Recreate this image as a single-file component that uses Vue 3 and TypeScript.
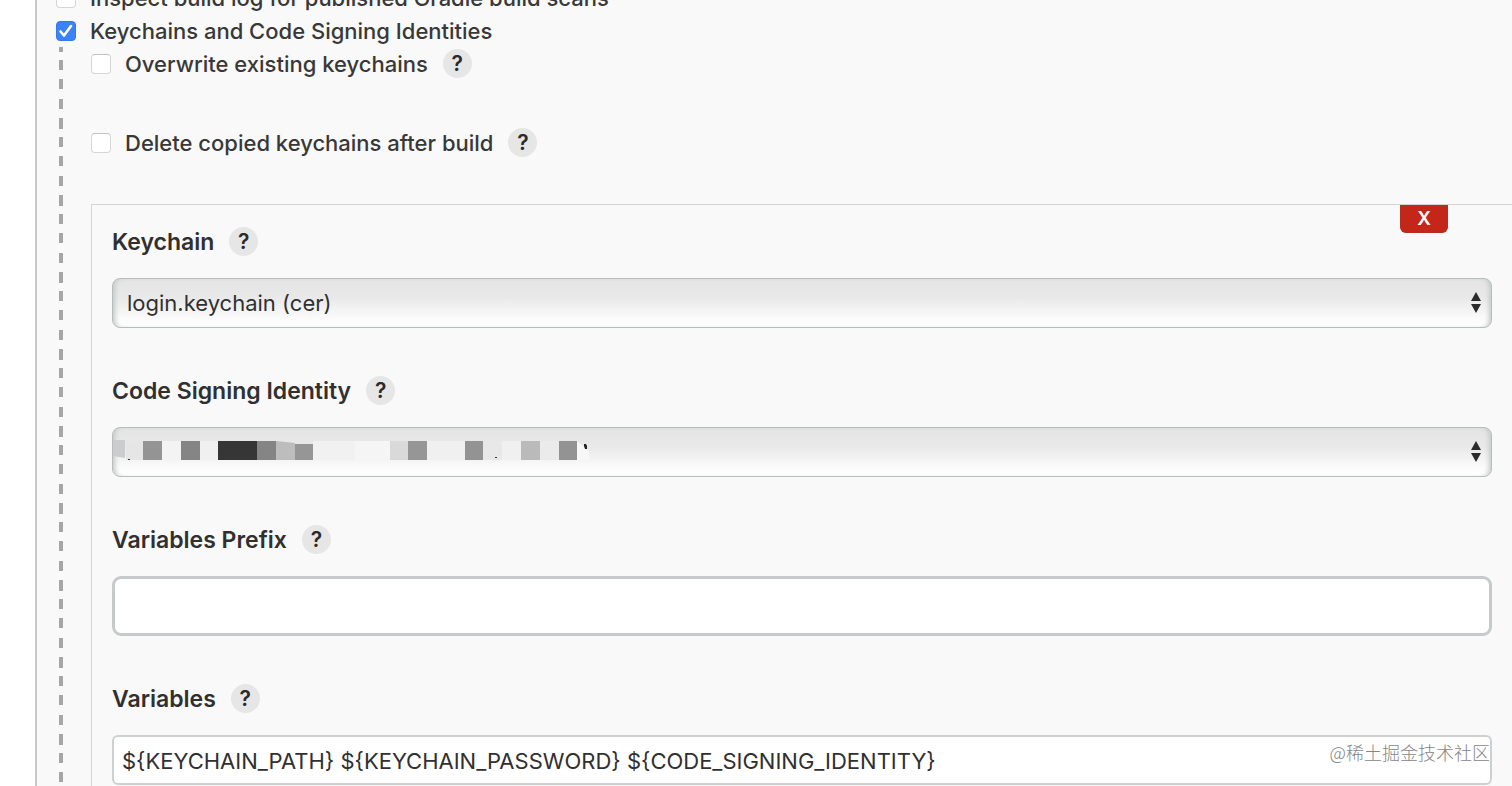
<script setup lang="ts">
import { ref } from 'vue'

interface Block {
  x: number
  w: number
  fill: string
}

const inspectLog = ref(false)
const keychainsEnabled = ref(true)
const overwrite = ref(false)
const deleteCopied = ref(false)
const keychain = ref('login')
const identity = ref('')
const prefix = ref('')
const variables = ref('${KEYCHAIN_PATH} ${KEYCHAIN_PASSWORD} ${CODE_SIGNING_IDENTITY}')

const blocks: Block[] = [
  { x: 14, w: 17, fill: '#e6e6e6' },
  { x: 31, w: 19, fill: '#949494' },
  { x: 50, w: 19, fill: '#f3f3f3' },
  { x: 69, w: 19, fill: '#858585' },
  { x: 88, w: 18, fill: '#f0f0f0' },
  { x: 106, w: 39, fill: '#363636' },
  { x: 145, w: 19, fill: '#858585' },
  { x: 201, w: 42, fill: '#f1f1f1' },
  { x: 243, w: 35, fill: '#f5f5f5' },
  { x: 278, w: 18, fill: '#d9d9d9' },
  { x: 296, w: 19, fill: '#969696' },
  { x: 315, w: 38, fill: '#f0f0f0' },
  { x: 353, w: 18, fill: '#939393' },
  { x: 371, w: 19, fill: '#e8e8e8' },
  { x: 390, w: 19, fill: '#f0f0f0' },
  { x: 409, w: 19, fill: '#bababa' },
  { x: 428, w: 19, fill: '#ebebeb' },
  { x: 447, w: 18, fill: '#939393' },
]
</script>

<template>
  <main class="page">
    <section class="panel">
      <div class="row">
        <input id="inspect" v-model="inspectLog" type="checkbox" class="check" />
        <label for="inspect">Inspect build log for published Gradle build scans</label>
      </div>
      <div class="row">
        <input id="keychains" v-model="keychainsEnabled" type="checkbox" class="check" />
        <label for="keychains">Keychains and Code Signing Identities</label>
      </div>

      <div class="nested">
        <div class="options">
          <div class="row">
            <input id="overwrite" v-model="overwrite" type="checkbox" class="check" />
            <label for="overwrite">Overwrite existing keychains</label>
            <button type="button" class="help">?</button>
          </div>
          <div class="row">
            <input id="delete" v-model="deleteCopied" type="checkbox" class="check" />
            <label for="delete">Delete copied keychains after build</label>
            <button type="button" class="help">?</button>
          </div>
        </div>

        <div class="card">
          <button type="button" class="remove">X</button>

          <div class="field">
            <div class="title">
              <label for="keychain">Keychain</label>
              <button type="button" class="help">?</button>
            </div>
            <div class="control">
              <select id="keychain" v-model="keychain" class="select">
                <option value="login">login.keychain (cer)</option>
              </select>
              <svg class="arrows" width="12" height="22" viewBox="0 0 12 22">
                <path d="M6 0 11 9H1ZM1 12h10L6 21Z" fill="#2b2b2b" />
              </svg>
            </div>
          </div>

          <div class="field">
            <div class="title">
              <label for="identity">Code Signing Identity</label>
              <button type="button" class="help">?</button>
            </div>
            <div class="control">
              <select id="identity" v-model="identity" class="select">
                <option value=""></option>
              </select>
              <svg class="mosaic" width="490" height="49" viewBox="0 0 490 49">
                <path d="M1 13H13V31L1 29Z" fill="#c9cdcd" />
                <rect v-for="b in blocks" :key="b.x" :x="b.x" y="14" :width="b.w" height="19" :fill="b.fill" />
                <path d="M164 14 183 16V33H164Z" fill="#bdbdbd" />
                <path d="M183 17H201V33H183Z" fill="#969696" />
                <path d="M465 14 477 24V33H465Z" fill="#f7f7f7" />
                <path d="M472 17h2l1 2v3h-2l-1-3Z" fill="#222" />
                <path d="M16 32h2v1h-2ZM383 30h2v1h-2Z" fill="#333" />
              </svg>
              <svg class="arrows" width="12" height="22" viewBox="0 0 12 22">
                <path d="M6 0 11 9H1ZM1 12h10L6 21Z" fill="#2b2b2b" />
              </svg>
            </div>
          </div>

          <div class="field">
            <div class="title">
              <label for="prefix">Variables Prefix</label>
              <button type="button" class="help">?</button>
            </div>
            <input id="prefix" v-model="prefix" type="text" class="text focused" />
          </div>

          <div class="field">
            <div class="title">
              <label for="variables">Variables</label>
              <button type="button" class="help">?</button>
            </div>
            <input id="variables" v-model="variables" type="text" class="text" />
          </div>
        </div>
      </div>
    </section>
    <span class="watermark">@稀土掘金技术社区</span>
  </main>
</template>

<style>
body {
  margin: 0;
  background: #fff;
}
</style>

<style scoped>
* {
  box-sizing: border-box;
}

.page {
  position: relative;
  height: 100vh;
  overflow: hidden;
  display: flow-root;
  font-family: Inter, "Noto Sans CJK SC", sans-serif;
  font-size: 22px;
  line-height: 32px;
  color: #303030;
}

.panel {
  margin: -19px 0 0 35px;
  padding-left: 19px;
  border-left: 2px solid #c8c8c8;
  background: #f9f9f9;
}

.row {
  display: flex;
  align-items: center;
  height: 33px;
  font-weight: 500;
  color: #383838;
}

.check {
  appearance: none;
  flex: none;
  width: 20px;
  height: 20px;
  margin: 1px 14px 0 0;
  border: 1px solid #d6d6d6;
  border-top-color: #c2c2c2;
  border-radius: 4px;
  background: #fff;
}

.check:checked {
  border-color: #3478f0;
  background: #3b82f7 url("data:image/svg+xml,%3Csvg xmlns='http://www.w3.org/2000/svg' viewBox='0 0 18 18'%3E%3Cpath d='M3.500 9.500 7 13.500 14 4' fill='none' stroke='white' stroke-width='2.600' stroke-linecap='round' stroke-linejoin='round'/%3E%3C/svg%3E") center / 18px 18px;
}

.nested {
  margin-left: 3px;
  padding-left: 32px;
  background: repeating-linear-gradient(
      #a6a6a6 0 5px,
      transparent 5px 13px,
      #a6a6a6 13px 23px,
      transparent 23px 32px,
      #a6a6a6 32px 42px,
      transparent 42px 52px,
      #a6a6a6 52px 62px,
      transparent 62px 71px,
      #a6a6a6 71px 77px
    )
    left top / 4px 100% no-repeat;
}

.options {
  display: flex;
  flex-direction: column;
  gap: 46px;
  padding-bottom: 45px;
}

.help {
  flex: none;
  width: 29px;
  height: 29px;
  margin-left: 15px;
  padding: 0;
  border: 0;
  border-radius: 50%;
  background: #e6e6e6;
  color: #2a2a2a;
  font: 600 21px/30px Inter, sans-serif;
  text-align: center;
}

.card {
  position: relative;
  padding: 22px 20px 4px;
  border-top: 1px solid #d4d4d4;
  border-left: 1px solid #d4d4d4;
}

.remove {
  position: absolute;
  top: 0;
  right: 64px;
  width: 48px;
  height: 28px;
  padding: 0;
  border: 1px solid #b0301c;
  border-top: 0;
  border-radius: 0 0 6px 6px;
  background: #c4261a;
  color: #fff;
  font: 600 19px/26px Inter, sans-serif;
}

.field + .field {
  margin-top: 48px;
}

.title {
  display: flex;
  align-items: center;
  height: 29px;
  margin-bottom: 22px;
  font-size: 23px;
  font-weight: 600;
}

.control {
  position: relative;
}

.select,
.text {
  display: block;
  width: 100%;
  height: 50px;
  margin: 0;
  border: 2px solid #cdd0d0;
  border-radius: 6px;
  color: #303030;
  font: 400 22px/30px Inter, sans-serif;
  outline: 0;
}

.select {
  appearance: none;
  padding: 0 40px 0 14px;
  border-width: 1px;
  border-color: #b8bcbc;
  border-radius: 8px;
  background: linear-gradient(#e4e4e4, #e9e9e9 40%, #fafafa 80%, #fff);
  box-shadow: inset 5px 0 5px -3px #c4c8c8, inset -5px 0 5px -3px #c4c8c8;
}

.text {
  padding: 2px 8px 0;
  background: #fff;
}

.focused {
  height: 60px;
  border-width: 3px;
  border-color: #c6caca;
  border-radius: 9px;
}

.arrows {
  position: absolute;
  top: 14px;
  right: 10px;
  pointer-events: none;
}

.mosaic {
  position: absolute;
  top: 0;
  left: 0;
  pointer-events: none;
}

.watermark {
  position: absolute;
  right: 22px;
  bottom: 22px;
  font: 300 18px/24px "Noto Sans CJK SC", sans-serif;
  color: #868686;
}
</style>
